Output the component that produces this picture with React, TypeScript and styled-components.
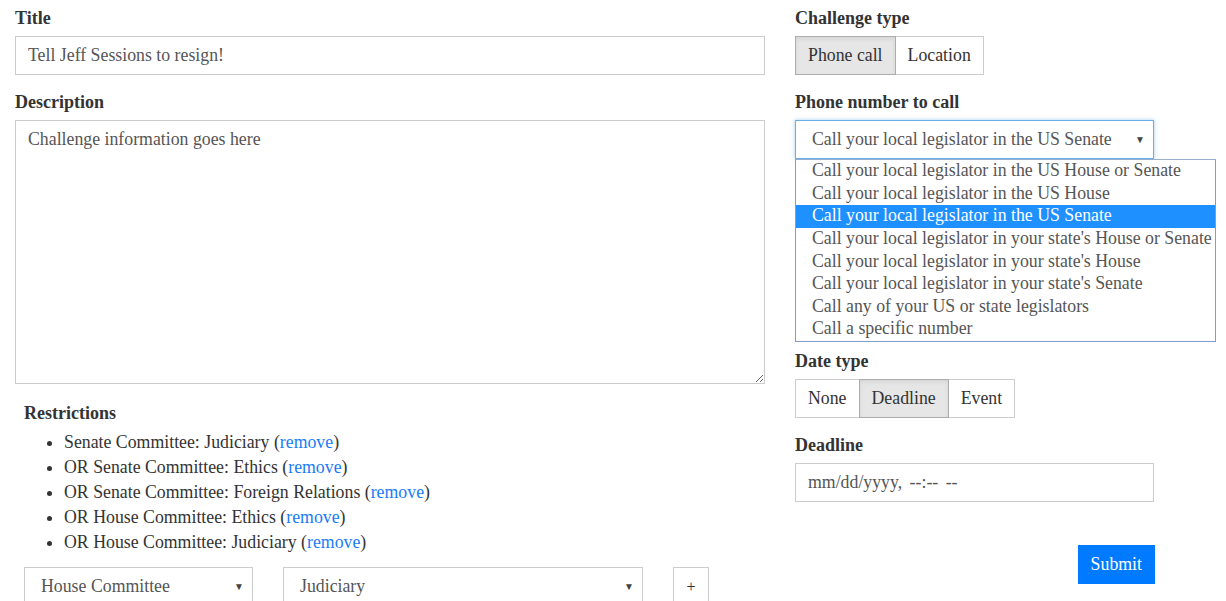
import React from "react";
import styled, { createGlobalStyle } from "styled-components";

const Global = createGlobalStyle`
  html, body { margin: 0; padding: 0; background: #fff; }
  body { font-family: "Liberation Serif", "Times New Roman", serif; font-size: 17.8px; color: #333; }
  * { box-sizing: border-box; }
`;

const Page = styled.div`
  display: flex;
  gap: 30px;
  padding: 6px 15px 0 15px;
  height: 601px;
  overflow: hidden;
`;

const LeftCol = styled.div`
  width: 750px;
  display: flex;
  flex-direction: column;
`;

const RightCol = styled.div`
  width: 360px;
  display: flex;
  flex-direction: column;
`;

const Group = styled.div<{ $mb?: number }>`
  display: flex;
  flex-direction: column;
  margin-bottom: ${(p) => (p.$mb ?? 15)}px;
`;

const Label = styled.div`
  font-weight: bold;
  font-size: 18px;
  line-height: 24px;
  margin-bottom: 6px;
  color: #333;
`;

const TextInput = styled.input<{ $w?: number }>`
  height: 39px;
  width: ${(p) => (p.$w ? `${p.$w}px` : "100%")};
  border: 1px solid #ccc;
  padding: 0 12px;
  font: inherit;
  color: #555;
  outline: none;
  &::placeholder { color: #555; opacity: 1; word-spacing: 3px; }
`;

const TextArea = styled.textarea`
  height: 264px;
  width: 100%;
  border: 1px solid #ccc;
  padding: 6px 12px;
  font: inherit;
  line-height: 24px;
  color: #555;
  outline: none;
  resize: vertical;
`;

const BtnGroup = styled.div`
  display: flex;
`;

const ToggleBtn = styled.div<{ $active?: boolean }>`
  height: 39px;
  display: flex;
  align-items: center;
  padding: 0 12px;
  border: 1px solid ${(p) => (p.$active ? "#adadad" : "#ccc")};
  background: ${(p) => (p.$active ? "#e6e6e6" : "#fff")};
  box-shadow: ${(p) => (p.$active ? "inset 0 2px 4px rgba(0,0,0,0.08)" : "none")};
  color: #333;
  position: relative;
  z-index: ${(p) => (p.$active ? 1 : 0)};
  & + & { margin-left: -1px; }
`;

const SelectBox = styled.div<{ $w: number; $focus?: boolean }>`
  width: ${(p) => p.$w}px;
  height: 39px;
  display: flex;
  align-items: center;
  justify-content: space-between;
  padding: 0 8px 0 16px;
  border: 1px solid ${(p) => (p.$focus ? "#66afe9" : "#ccc")};
  box-shadow: ${(p) => (p.$focus ? "0 0 4px rgba(102,175,233,0.6)" : "none")};
  color: #555;
  background: #fff;
  flex-shrink: 0;
`;

const Arrow = styled.span`
  font-size: 10px;
  color: #444;
  line-height: 1;
`;

const ListBox = styled.div`
  width: 421px;
  border: 1px solid #7f9ccb;
  border-top-color: #9aaed0;
  display: flex;
  flex-direction: column;
  background: #fff;
`;

const Option = styled.div<{ $sel?: boolean }>`
  height: 22.625px;
  line-height: 21.6px;
  padding-left: 16px;
  white-space: nowrap;
  background: ${(p) => (p.$sel ? "#1e90ff" : "transparent")};
  color: ${(p) => (p.$sel ? "#fff" : "#555")};
`;

const Restrictions = styled.div`
  padding-left: 9px;
  margin-top: 1px;
  display: flex;
  flex-direction: column;
`;

const List = styled.ul`
  margin: 4.5px 0 12.5px 0;
  padding-left: 40px;
  list-style: disc;
`;

const Item = styled.li`
  line-height: 25px;
  color: #333;
`;

const Link = styled.a`
  color: #1a7cf5;
  text-decoration: none;
`;

const AddRow = styled.div`
  display: flex;
  gap: 30px;
`;

const PlusBtn = styled.div`
  width: 36px;
  height: 39px;
  border: 1px solid #ccc;
  display: flex;
  align-items: center;
  justify-content: center;
  color: #333;
  font-size: 16px;
`;

const SubmitRow = styled.div`
  display: flex;
  justify-content: flex-end;
  margin-top: 43px;
  width: 360px;
`;

const SubmitBtn = styled.button`
  height: 39px;
  padding: 0 12px;
  background: #007bff;
  color: #fff;
  border: 1px solid #007bff;
  font: inherit;
  border-radius: 0;
`;

const options = [
  "Call your local legislator in the US House or Senate",
  "Call your local legislator in the US House",
  "Call your local legislator in the US Senate",
  "Call your local legislator in your state's House or Senate",
  "Call your local legislator in your state's House",
  "Call your local legislator in your state's Senate",
  "Call any of your US or state legislators",
  "Call a specific number",
];

const restrictions = [
  "Senate Committee: Judiciary",
  "OR Senate Committee: Ethics",
  "OR Senate Committee: Foreign Relations",
  "OR House Committee: Ethics",
  "OR House Committee: Judiciary",
];

export default function App() {
  return (
    <>
      <Global />
      <Page>
        <LeftCol>
          <Group>
            <Label>Title</Label>
            <TextInput defaultValue="Tell Jeff Sessions to resign!" />
          </Group>
          <Group $mb={16}>
            <Label>Description</Label>
            <TextArea defaultValue="Challenge information goes here" />
          </Group>
          <Restrictions>
            <Label style={{ marginBottom: 0 }}>Restrictions</Label>
            <List>
              {restrictions.map((r) => (
                <Item key={r}>
                  {r} (<Link href="#">remove</Link>)
                </Item>
              ))}
            </List>
            <AddRow>
              <SelectBox $w={229}>
                <span>House Committee</span>
                <Arrow>▼</Arrow>
              </SelectBox>
              <SelectBox $w={360}>
                <span>Judiciary</span>
                <Arrow>▼</Arrow>
              </SelectBox>
              <PlusBtn>+</PlusBtn>
            </AddRow>
          </Restrictions>
        </LeftCol>
        <RightCol>
          <Group>
            <Label>Challenge type</Label>
            <BtnGroup>
              <ToggleBtn $active>Phone call</ToggleBtn>
              <ToggleBtn>Location</ToggleBtn>
            </BtnGroup>
          </Group>
          <Group $mb={7}>
            <Label>Phone number to call</Label>
            <SelectBox $w={359} $focus>
              <span>Call your local legislator in the US Senate</span>
              <Arrow>▼</Arrow>
            </SelectBox>
            <ListBox>
              {options.map((o, i) => (
                <Option key={o} $sel={i === 2}>
                  {o}
                </Option>
              ))}
            </ListBox>
          </Group>
          <Group>
            <Label>Date type</Label>
            <BtnGroup>
              <ToggleBtn>None</ToggleBtn>
              <ToggleBtn $active>Deadline</ToggleBtn>
              <ToggleBtn>Event</ToggleBtn>
            </BtnGroup>
          </Group>
          <Group $mb={0}>
            <Label>Deadline</Label>
            <TextInput $w={359} placeholder="mm/dd/yyyy, --:-- --" />
          </Group>
          <SubmitRow>
            <SubmitBtn>Submit</SubmitBtn>
          </SubmitRow>
        </RightCol>
      </Page>
    </>
  );
}
